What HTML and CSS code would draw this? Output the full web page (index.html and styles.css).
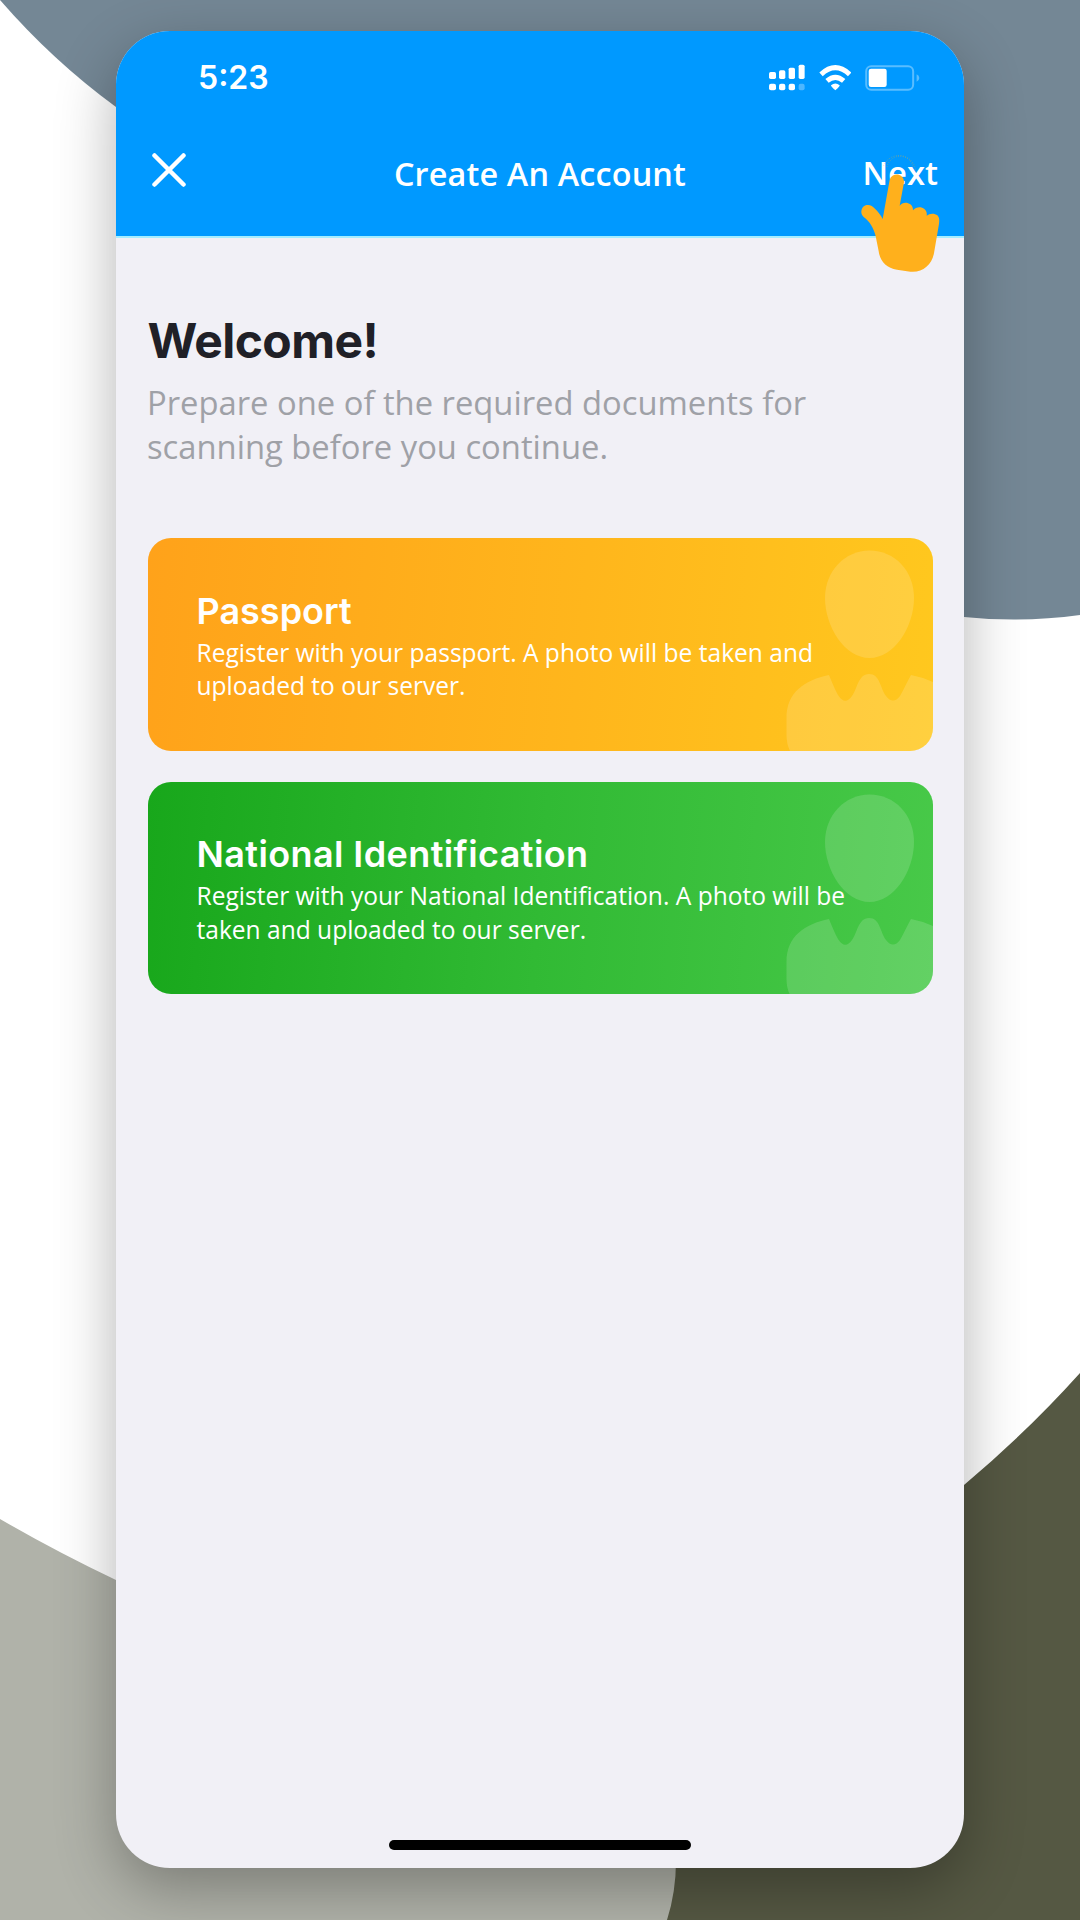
FILE: index.html
```html
<!DOCTYPE html>
<html lang="en">
<head>
<meta charset="utf-8">
<title>Create An Account</title>
<link rel="stylesheet" href="styles.css">
</head>
<body>
<svg class="backdrop" viewBox="0 0 1080 1920" aria-hidden="true">
  <path fill="#748795" d="M0 0Q53 61 116 107L964 617Q1022 623 1080 615V0Z"/>
  <path fill="#555843" d="M1080 1373Q1027 1432 964 1485L600 1700V1920H1080Z"/>
  <path fill="#b0b2a9" d="M0 1519Q57 1552 116 1580L676 1860Q676 1892 667 1920H0Z"/>
</svg>
<main class="phone">
  <header class="header">
    <div class="status">
      <span class="time">5:23</span>
      <div class="status-icons">
        <svg class="signal" viewBox="208 130 108 82" fill="#fff">
          <rect x="208" y="154" width="21" height="21" rx="5"/><rect x="238" y="149" width="19" height="26" rx="5"/><rect x="267" y="141" width="19" height="34" rx="5"/><rect x="297" y="132" width="18" height="43" rx="5"/>
          <rect x="208" y="189" width="21" height="20" rx="6"/><rect x="238" y="189" width="19" height="20" rx="6"/><rect x="267" y="189" width="19" height="20" rx="6"/><rect x="297" y="189" width="18" height="20" rx="6" opacity=".3"/>
        </svg>
        <svg class="wifi" viewBox="356 130 98 82" fill="none" stroke="#fff" stroke-width="15">
          <path d="M362 161Q405 121 448 161M380 181Q405 159 430 181"/>
          <path fill="#fff" stroke="none" d="M392 194Q405 183 418 194Q419 197 405 209Q391 197 392 194Z"/>
        </svg>
        <svg class="battery" viewBox="496 130 164 82">
          <rect x="499.500" y="136.500" width="141" height="71" rx="15" fill="none" stroke="#59bdff" stroke-width="6"/>
          <rect x="507" y="144" width="54" height="55" rx="7" fill="#fff"/>
          <path fill="#59bdff" d="M651 161Q659 164 659 172T651 183Z"/>
        </svg>
      </div>
    </div>
    <nav class="nav">
      <svg class="close" viewBox="0 0 34 34" fill="none" stroke="#fff" stroke-width="4.500" stroke-linecap="round"><path d="M2.500 2.500l29 29M31.500 2.500l-29 29"/></svg>
      <h1 class="title">Create An Account</h1>
      <a class="next">Next
        <svg class="hand" viewBox="484 400 236 356">
          <path d="M552 438A50 50 0 0 1 648 455M562 442A40 40 0 0 1 640 440" fill="none" stroke="#ffb01c" stroke-width="2" stroke-dasharray="2 5" opacity=".7"/>
          <path fill="#ffb01c" d="M570 480A22 22 0 0 1 613 488L600 558C607 548 622 546 632 554C638 559 640 565 640 572C648 562 664 560 674 568C681 574 682 580 681 588C690 580 705 580 713 587C720 594 719 602 718 612L703 700C697 735 668 760 632 756L592 750C560 745 541 724 537 695L528 650C522 625 510 605 492 592C480 582 484 562 498 557C510 554 518 559 526 567C536 577 545 588 549 598Z"/>
        </svg>
      </a>
    </nav>
  </header>
  <section class="content">
    <h2 class="welcome">Welcome!</h2>
    <p class="intro">Prepare one of the required documents for<br>scanning before you continue.</p>
    <article class="card passport">
      <svg class="person" viewBox="780 538 152.500 212.500" fill="#fff" fill-opacity=".15">
        <path d="M869.500 550.500C895 550.500 914 571 914 598C914 627 894 658 869.500 658C845 658 825 627 825 598C825 571 845 550.500 869.500 550.500Z"/>
        <path d="M790 751Q786.500 744 786.500 735V718C786.500 692 805 680 829 675C832 682 835 690 838 695Q845 706 852 696C857 690 858 674 869 674C880 674 880 688 886 696Q893 705 900 696C904 689 907 682 911 675Q922 677 933 682V751Z"/>
      </svg>
      <h3>Passport</h3>
      <p>Register with your passport. A photo will be taken and<br>uploaded to our server.</p>
    </article>
    <article class="card national">
      <svg class="person" viewBox="780 538 152.500 212.500" fill="#fff" fill-opacity=".15">
        <path d="M869.500 550.500C895 550.500 914 571 914 598C914 627 894 658 869.500 658C845 658 825 627 825 598C825 571 845 550.500 869.500 550.500Z"/>
        <path d="M790 751Q786.500 744 786.500 735V718C786.500 692 805 680 829 675C832 682 835 690 838 695Q845 706 852 696C857 690 858 674 869 674C880 674 880 688 886 696Q893 705 900 696C904 689 907 682 911 675Q922 677 933 682V751Z"/>
      </svg>
      <h3>National Identification</h3>
      <p>Register with your National Identification. A photo will be<br>taken and uploaded to our server.</p>
    </article>
  </section>
  <div class="home"></div>
</main>
</body>
</html>
```
FILE: styles.css
```css
* { box-sizing: border-box; }
body { margin: 0; width: 1080px; height: 1920px; overflow: hidden; background: #fff; position: relative; padding: 31px 116px 0; font-family: "Open Sans", sans-serif; }
h1, h2, h3, p { margin: 0; }
.backdrop { position: absolute; inset: 0; width: 1080px; height: 1920px; }
.phone { position: relative; width: 848px; height: 1837px; border-radius: 54px; background: #f1f0f6; box-shadow: 0 20px 60px rgba(0, 0, 0, .3); display: flex; flex-direction: column; }
.header { height: 207px; flex: none; background: #09f; border-bottom: 2px solid #a6edff; border-radius: 54px 54px 0 0; color: #fff; padding-top: 20px; }
.status { height: 54px; display: flex; align-items: center; justify-content: space-between; padding: 0 44px 0 82px; }
.time { font: 600 32px/54px Inter, sans-serif; }
.status-icons { display: flex; gap: 14px; align-items: center; }
.status-icons svg { height: 27.300px; display: block; }
.signal { width: 36px; }
.wifi { width: 32.700px; }
.battery { width: 54.700px; }
.nav { display: grid; grid-template-columns: 110px 1fr 110px; align-items: center; height: 72px; margin-top: 32px; padding: 0 26px; }
.close { width: 34px; height: 34px; margin: 0 0 6px 10px; }
.title { font-size: 32.400px; font-weight: 600; line-height: 44px; text-align: center; letter-spacing: .15px; }
.next { font-size: 32.800px; font-weight: 600; line-height: 44px; text-align: right; position: relative; }
.hand { position: absolute; width: 78.700px; height: 118.700px; right: -2px; top: 2px; }
.content { padding: 74px 31.500px 0; flex: 1; }
.welcome { font: 700 48px/58px Inter, sans-serif; color: #202027; letter-spacing: -.6px; }
.intro { font-size: 32.750px; line-height: 44px; color: #9fa1a7; margin: 11px 0 0 -.5px; height: 89px; }
.card { position: relative; height: 212.500px; border-radius: 23px; overflow: hidden; color: #fff; padding: 50.500px 49px 0; margin-top: 31px; }
.passport { margin-top: 68px; background: linear-gradient(95deg, #ffa21a, #ffb61c 55%, #ffc81e); }
.national { background: linear-gradient(95deg, #18a71b, #31ba34 50%, #48c949); }
.card h3 { font: 600 36px/44px Inter, sans-serif; }
.national h3 { letter-spacing: .4px; }
.card p { font-size: 24.550px; line-height: 33.500px; position: relative; margin-top: 3px; }
.person { position: absolute; right: 0; top: 0; width: 152.500px; height: 212.500px; }
.home { width: 302px; height: 10px; border-radius: 5px; background: #000; margin: 0 auto 18px; }
```
